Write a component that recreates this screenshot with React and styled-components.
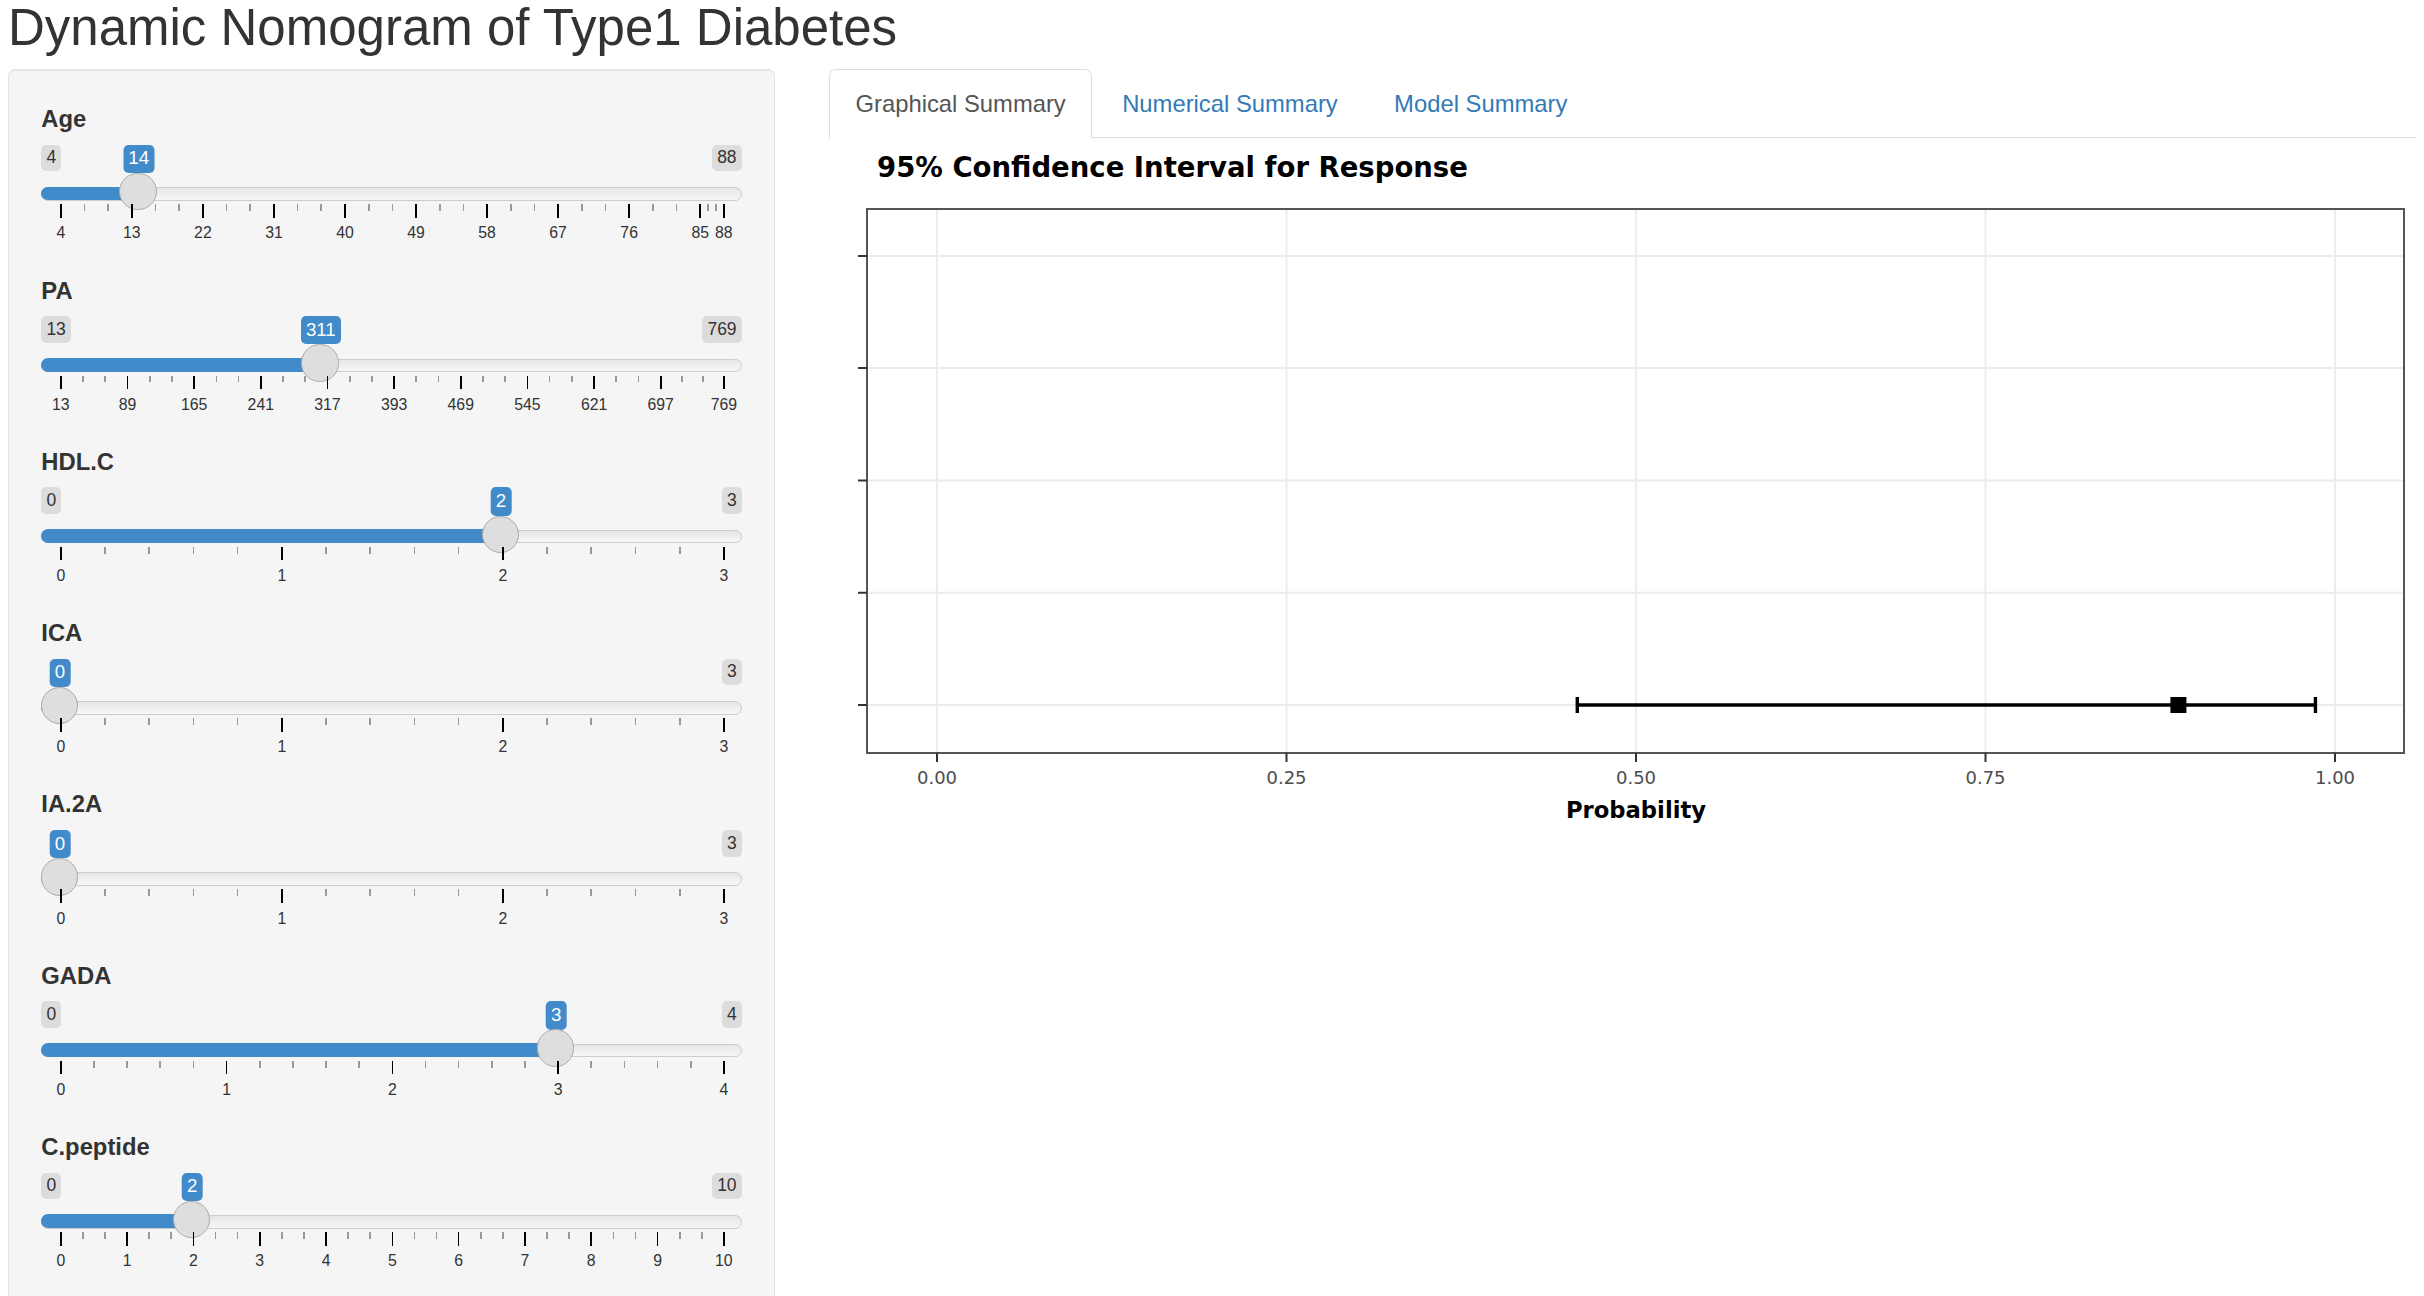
import React from "react";
import styled, { createGlobalStyle } from "styled-components";

const GlobalStyle = createGlobalStyle`
  html, body {
    margin: 0;
    padding: 0;
    background: #fff;
    overflow: hidden;
  }
  body {
    font-family: "Liberation Sans", Arial, sans-serif;
    font-size: 23.8px;
    line-height: 1.42857;
    color: #333;
  }
  * {
    box-sizing: border-box;
  }
`;

const Page = styled.div`
  padding: 0 8px;
`;

const Title = styled.h2`
  margin: 0 0 13px;
  font-size: 51px;
  font-weight: 400;
  line-height: 56px;
  color: #333;
`;

const Row = styled.div`
  display: flex;
  align-items: flex-start;
  gap: 54px;
`;

const Well = styled.div`
  flex: 0 0 767px;
  display: flex;
  flex-direction: column;
  gap: 26.8px;
  padding: 32.3px;
  min-height: 1400px;
  background-color: #f5f5f5;
  border: 1.7px solid #e3e3e3;
  border-radius: 6.8px;
  box-shadow: inset 0 1px 1px rgba(0, 0, 0, 0.05);
`;

const Main = styled.div`
  flex: 1;
  min-width: 0;
`;

/* ---------- slider ---------- */

const Group = styled.div`
  display: flex;
  flex-direction: column;
`;

const Label = styled.label`
  margin-bottom: 8.5px;
  font-weight: 700;
  font-size: 23.8px;
  line-height: 34px;
`;

const Irs = styled.div`
  display: flex;
  flex-direction: column;
  height: 102px;
`;

const BadgeRow = styled.div`
  position: relative;
  display: flex;
  justify-content: space-between;
  align-items: flex-start;
  height: 26px;
`;

const Badge = styled.span`
  padding: 1.7px 5.1px;
  border-radius: 5.1px;
  font-size: ${(p) => (p.$value ? "18.7px" : "17.5px")};
  line-height: 1.333;
  white-space: nowrap;
  color: ${(p) => (p.$value ? "#fff" : "#333")};
  background-color: ${(p) => (p.$value ? "#428bca" : "rgba(0, 0, 0, 0.1)")};
  visibility: ${(p) => (p.$hidden ? "hidden" : "visible")};
`;

/* the current value floats over the min / max row, above the handle */
const ValueBadge = styled(Badge)`
  position: absolute;
  top: 0;
  transform: translateX(-50%);
`;

const Track = styled.div`
  position: relative;
  margin-top: 16.5px;
  height: 13.6px;
  background: linear-gradient(to bottom, #dedede -50%, #fff 150%);
  background-color: #ededed;
  border: 1.7px solid #ccc;
  border-radius: 13.6px;
`;

const Bar = styled.div`
  margin: -1.7px 0 0 -1.7px;
  height: 13.6px;
  background: #428bca;
  border-radius: 13.6px 0 0 13.6px;
`;

const Handle = styled.span`
  position: absolute;
  top: -15.3px;
  width: 37.4px;
  height: 37.4px;
  border: 1.7px solid #ababab;
  background-color: #dedede;
  border-radius: 50%;
`;

const Grid = styled.div`
  position: relative;
  margin: 3.4px 18.7px 0;
  height: 42.5px;
`;

const Pol = styled.span`
  position: absolute;
  top: 0;
  width: 1.7px;
  height: ${(p) => (p.$small ? "6.8px" : "13.6px")};
  background-color: ${(p) => (p.$small ? "#999" : "#000")};
`;

const GridText = styled.span`
  position: absolute;
  bottom: 5.5px;
  transform: translateX(-50%);
  font-size: 15.8px;
  line-height: 1;
  color: #333;
  white-space: nowrap;
`;

const sliders = [
  { label: "Age", min: 4, max: 88, value: 14, ticks: [4, 13, 22, 31, 40, 49, 58, 67, 76, 85, 88], small: 2 },
  { label: "PA", min: 13, max: 769, value: 311, ticks: [13, 89, 165, 241, 317, 393, 469, 545, 621, 697, 769], small: 2 },
  { label: "HDL.C", min: 0, max: 3, value: 2, ticks: [0, 1, 2, 3], small: 4 },
  { label: "ICA", min: 0, max: 3, value: 0, ticks: [0, 1, 2, 3], small: 4 },
  { label: "IA.2A", min: 0, max: 3, value: 0, ticks: [0, 1, 2, 3], small: 4 },
  { label: "GADA", min: 0, max: 4, value: 3, ticks: [0, 1, 2, 3, 4], small: 4 },
  { label: "C.peptide", min: 0, max: 10, value: 2, ticks: [0, 1, 2, 3, 4, 5, 6, 7, 8, 9, 10], small: 2 },
];

const TRACK = 699;
const HANDLE = 37.4;

const Slider = ({ label, min, max, value, ticks, small }) => {
  const p = (value - min) / (max - min);
  const center = HANDLE / 2 + p * (TRACK - HANDLE);
  const valW = String(value).length * 10.4 + 10.2;
  const minW = String(min).length * 9.5 + 10.2;
  const maxW = String(max).length * 9.5 + 10.2;
  const hideMin = center - valW / 2 <= minW + 3;
  const hideMax = center + valW / 2 >= TRACK - maxW - 3;

  const pols = [];
  let prev = 0;
  ticks.forEach((t, i) => {
    const pct = ((t - min) / (max - min)) * 100;
    if (i > 0) {
      const step = (pct - prev) / (small + 1);
      for (let z = 1; z <= small; z++) {
        pols.push(<Pol key={`s${i}-${z}`} $small style={{ left: `${pct - step * z}%` }} />);
      }
    }
    pols.push(<Pol key={`b${i}`} style={{ left: `${pct}%` }} />);
    pols.push(
      <GridText key={`t${i}`} style={{ left: `calc(${pct}% + 0.85px)` }}>
        {t}
      </GridText>
    );
    prev = pct;
  });

  return (
    <Group>
      <Label>{label}</Label>
      <Irs>
        <BadgeRow>
          <Badge $hidden={hideMin}>{min}</Badge>
          <Badge $hidden={hideMax}>{max}</Badge>
          <ValueBadge $value style={{ left: `${center}px` }}>
            {value}
          </ValueBadge>
        </BadgeRow>
        <Track>
          <Bar style={{ width: `${center}px` }} />
          <Handle style={{ left: `${center - HANDLE / 2 - 1.7}px` }} />
        </Track>
        <Grid>{pols}</Grid>
      </Irs>
    </Group>
  );
};

/* ---------- tabs ---------- */

const Tabs = styled.ul`
  display: flex;
  margin: 0;
  padding: 0;
  list-style: none;
  border-bottom: 1.7px solid #ddd;
`;

const Tab = styled.li`
  margin-right: 3.4px;
  margin-bottom: -1.7px;
  padding: 17px 25.5px;
  font-size: 23.8px;
  line-height: 34px;
  border: 1.7px solid ${(p) => (p.$active ? "#ddd" : "transparent")};
  border-bottom-color: ${(p) => (p.$active ? "#fff" : "transparent")};
  border-radius: 6.8px 6.8px 0 0;
  background: ${(p) => (p.$active ? "#fff" : "transparent")};
  color: ${(p) => (p.$active ? "#555" : "#337ab7")};
  cursor: pointer;
`;

/* ---------- plot ---------- */

const PlotSvg = styled.svg`
  display: block;
  width: 1587px;
  height: 700px;
`;

const Plot = () => {
  const x0 = 108;
  const x1 = 1506;
  const sx = (v) => x0 + v * (x1 - x0);
  const ys = [118, 230, 342.5, 454.75, 567];
  const xt = [0, 0.25, 0.5, 0.75, 1];
  const lo = sx(0.458);
  const hi = sx(0.986);
  const pt = sx(0.888);
  const yc = ys[4];

  return (
    <PlotSvg viewBox="0 0 1587 700">
      <text
        x="48"
        y="39"
        fontFamily="'DejaVu Sans', sans-serif"
        fontWeight="700"
        fontSize="27.5"
        fill="#000"
      >
        95% Confidence Interval for Response
      </text>

      {ys.map((y) => (
        <line key={`gy${y}`} x1="38" x2="1575" y1={y} y2={y} stroke="#ebebeb" strokeWidth="1.8" />
      ))}
      {xt.map((v) => (
        <line key={`gx${v}`} x1={sx(v)} x2={sx(v)} y1="71" y2="615" stroke="#ebebeb" strokeWidth="1.8" />
      ))}
      <rect x="38" y="71" width="1537" height="544" fill="none" stroke="#555" strokeWidth="2" />

      {ys.map((y) => (
        <line key={`ty${y}`} x1="29" x2="38" y1={y} y2={y} stroke="#333" strokeWidth="2" />
      ))}
      {xt.map((v) => (
        <g key={`tx${v}`}>
          <line x1={sx(v)} x2={sx(v)} y1="615" y2="624" stroke="#333" strokeWidth="2" />
          <text
            x={sx(v)}
            y="646"
            textAnchor="middle"
            fontFamily="'DejaVu Sans', sans-serif"
            fontSize="18"
            fill="#4d4d4d"
          >
            {v.toFixed(2)}
          </text>
        </g>
      ))}

      <text
        x="807"
        y="680"
        textAnchor="middle"
        fontFamily="'DejaVu Sans', sans-serif"
        fontWeight="700"
        fontSize="22.7"
        fill="#000"
      >
        Probability
      </text>

      <line x1={lo} x2={hi} y1={yc} y2={yc} stroke="#000" strokeWidth="3.4" />
      <line x1={lo} x2={lo} y1={yc - 8} y2={yc + 8} stroke="#000" strokeWidth="3.4" />
      <line x1={hi} x2={hi} y1={yc - 8} y2={yc + 8} stroke="#000" strokeWidth="3.4" />
      <rect x={pt - 8} y={yc - 8} width="16" height="16" fill="#000" />
    </PlotSvg>
  );
};

const App = () => {
  return (
    <Page>
      <GlobalStyle />
      <Title>Dynamic Nomogram of Type1 Diabetes</Title>
      <Row>
        {/* input sliders */}
        <Well>
          {sliders.map((s) => (
            <Slider key={s.label} {...s} />
          ))}
        </Well>
        {/* tabbed output */}
        <Main>
          <Tabs>
            <Tab $active>Graphical Summary</Tab>
            <Tab>Numerical Summary</Tab>
            <Tab>Model Summary</Tab>
          </Tabs>
          <Plot />
        </Main>
      </Row>
    </Page>
  );
};

export default App;
